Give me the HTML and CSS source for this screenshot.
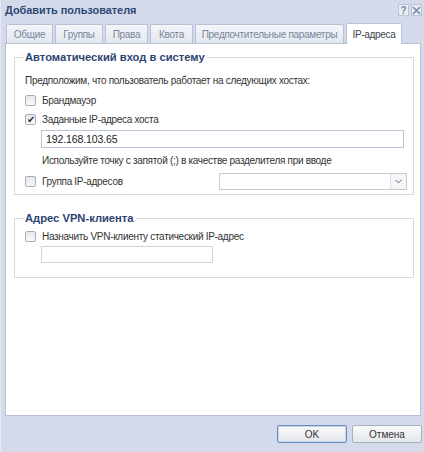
FILE: index.html
```html
<!DOCTYPE html>
<html lang="ru">
<head>
    <meta charset="UTF-8">
    <title>Добавить пользователя</title>
    <link rel="stylesheet" href="styles.css">
</head>
<body>
    <div class="dialog">
        <div class="title-bar">
            <div class="title">Добавить пользователя</div>
            <div class="title-buttons">
                <span class="tb-btn">?</span>
                <span class="tb-btn">
                    <svg width="9" height="9" viewBox="0 0 9 9"><path d="M1 1 L8 8 M8 1 L1 8" stroke="#7d8aa3" stroke-width="1.6"/></svg>
                </span>
            </div>
        </div>

        <div class="tabs">
            <div class="tab">Общие</div>
            <div class="tab">Группы</div>
            <div class="tab">Права</div>
            <div class="tab">Квота</div>
            <div class="tab">Предпочтительные параметры</div>
            <div class="tab active">IP-адреса</div>
        </div>

        <div class="panel">
            <fieldset class="group first">
                <legend>Автоматический вход в систему</legend>
                <div class="note">Предположим, что пользователь работает на следующих хостах:</div>
                <label class="check-row"><span class="checkbox"></span>Брандмауэр</label>
                <label class="check-row"><span class="checkbox checked">✔</span>Заданные IP-адреса хоста</label>
                <div class="field wide">192.168.103.65</div>
                <div class="hint">Используйте точку с запятой (;) в качестве разделителя при вводе</div>
                <div class="check-row split">
                    <label class="check-label"><span class="checkbox"></span>Группа IP-адресов</label>
                    <div class="select">
                        <span class="select-arrow">
                            <svg width="7" height="5" viewBox="0 0 7 5"><path d="M0.5 0.8 L3.5 3.8 L6.5 0.8" fill="none" stroke="#8a93a3" stroke-width="1.1"/></svg>
                        </span>
                    </div>
                </div>
            </fieldset>

            <fieldset class="group second">
                <legend>Адрес VPN-клиента</legend>
                <label class="check-row"><span class="checkbox"></span>Назначить VPN-клиенту статический IP-адрес</label>
                <div class="field short"></div>
            </fieldset>
        </div>

        <div class="footer">
            <button class="btn default">OK</button>
            <button class="btn">Отмена</button>
        </div>
    </div>
</body>
</html>
```

FILE: styles.css
```css
* {
    margin: 0;
    padding: 0;
    box-sizing: border-box;
}

body {
    font-family: 'Liberation Sans', Arial, sans-serif;
    font-size: 10px;
    letter-spacing: -0.3px;
    color: #333;
    background: #d4daea;
}

.dialog {
    width: 424px;
    height: 452px;
    display: flex;
    flex-direction: column;
    background: #d4daea;
    border-left: 1px solid #e4e8f1;
}

.title-bar {
    height: 22px;
    display: flex;
    align-items: center;
    justify-content: space-between;
    padding: 0 2px 0 4px;
}

.title {
    font-weight: bold;
    font-size: 10.9px;
    letter-spacing: 0;
    color: #2d4775;
    margin-top: -2px;
}

.title-buttons {
    display: flex;
    gap: 2px;
    align-self: flex-start;
    margin-top: 4px;
}

.tb-btn {
    width: 11px;
    height: 12px;
    border: 1px solid #b9c3d5;
    background: #e9edf4;
    color: #7d8aa3;
    font-size: 10px;
    font-weight: bold;
    display: flex;
    align-items: center;
    justify-content: center;
}

.tabs {
    height: 21px;
    display: flex;
    align-items: flex-end;
    padding-left: 5px;
    gap: 2px;
}

.tab {
    height: 19px;
    padding: 0 2px;
    display: flex;
    align-items: center;
    justify-content: center;
    white-space: nowrap;
    border: 1px solid #b8c2d6;
    border-bottom: none;
    background: linear-gradient(#f3f5f9, #e3e8f0);
    color: #7a8699;
    border-radius: 2px 2px 0 0;
}

.tab:nth-child(1) { width: 47px; }
.tab:nth-child(2) { width: 48px; }
.tab:nth-child(3) { width: 43px; }
.tab:nth-child(4) { width: 43px; }
.tab:nth-child(5) { width: 149px; }

.tab.active {
    width: 56px;
    height: 21px;
    background: #fff;
    color: #3a4252;
    margin-bottom: -1px;
    position: relative;
    z-index: 1;
}

.panel {
    flex: 1;
    background: #fff;
    margin: 0 3px 0 4px;
    border: 1px solid #b8c2d6;
    padding: 7px 6px 0 8px;
}

.group {
    border: 1px solid #d5d8de;
    padding: 0 6px 0 10px;
}

.group legend {
    font-weight: bold;
    font-size: 11.2px;
    letter-spacing: 0;
    color: #2e4470;
    padding: 0 2px 0 1px;
    margin-left: -1px;
}

.group.first {
    height: 144px;
}

.group.second {
    margin-top: 17px;
    height: 66px;
}

.note {
    margin-top: 12px;
    margin-bottom: 5px;
}

.check-row {
    display: flex;
    align-items: center;
    height: 19px;
}

.check-label {
    display: flex;
    align-items: center;
}

.checkbox {
    width: 11px;
    height: 11px;
    border: 1px solid #a9afb8;
    border-radius: 2px;
    background: linear-gradient(#e6e8ec, #f7f8fa);
    margin-right: 6px;
    display: flex;
    align-items: center;
    justify-content: center;
    font-size: 10px;
    letter-spacing: 0;
    color: #333;
    line-height: 1;
}

.field {
    height: 18px;
    border: 1px solid #b7c4d8;
    background: #fff;
    padding: 0 4px;
    display: flex;
    align-items: center;
    font-size: 10.5px;
    letter-spacing: -0.1px;
    color: #222;
}

.field.wide {
    margin: 1px 0 0 16px;
    width: 363px;
}

.field.short {
    margin: 0 0 0 16px;
    width: 172px;
    height: 17px;
    border-color: #cfd3da;
}

.hint {
    margin: 7px 0 0 17px;
    height: 14px;
}

.split {
    justify-content: space-between;
    margin-top: 3px;
}

.select {
    width: 188px;
    height: 17px;
    border: 1px solid #c7ccd4;
    display: flex;
    justify-content: flex-end;
}

.select-arrow {
    width: 16px;
    border-left: 1px solid #dfe2e7;
    background: #f4f5f7;
    display: flex;
    align-items: center;
    justify-content: center;
}

.group.second .check-row {
    margin-top: 3px;
}

.footer {
    height: 36px;
    display: flex;
    justify-content: flex-end;
    align-items: flex-start;
    gap: 5px;
    padding: 9px 2px 0 0;
}

.btn {
    width: 70px;
    height: 18px;
    font-family: inherit;
    font-size: 10px;
    color: #333;
    border: 1px solid #a7b0bf;
    border-radius: 2px;
    background: linear-gradient(#fbfbfc, #e3e6ea);
}

.btn.default {
    border-color: #6a8cc4;
    box-shadow: inset 0 0 0 1px #c6d6ee;
}
```
